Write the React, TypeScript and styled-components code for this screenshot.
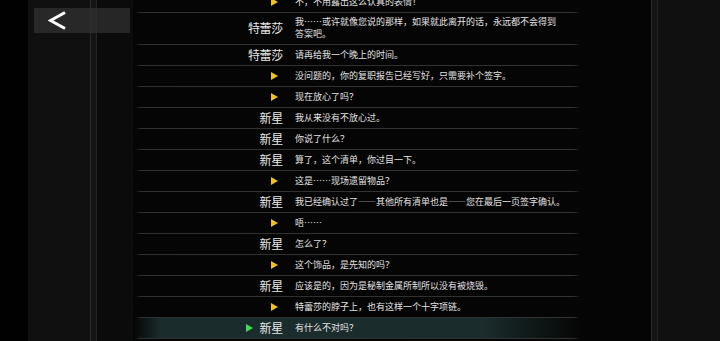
import styled, { createGlobalStyle } from "styled-components";

type Entry = {
  speaker?: string;
  lines: string[];
  current?: boolean;
};

const LOG: Entry[] = [
  { lines: ["不，不用露出这么认真的表情！"] },
  {
    speaker: "特蕾莎",
    lines: ["我……或许就像您说的那样，如果就此离开的话，永远都不会得到", "答案吧。"],
  },
  { speaker: "特蕾莎", lines: ["请再给我一个晚上的时间。"] },
  { lines: ["没问题的，你的复职报告已经写好，只需要补个签字。"] },
  { lines: ["现在放心了吗？"] },
  { speaker: "新星", lines: ["我从来没有不放心过。"] },
  { speaker: "新星", lines: ["你说了什么？"] },
  { speaker: "新星", lines: ["算了，这个清单，你过目一下。"] },
  { lines: ["这是……现场遗留物品？"] },
  { speaker: "新星", lines: ["我已经确认过了——其他所有清单也是——您在最后一页签字确认。"] },
  { lines: ["唔……"] },
  { speaker: "新星", lines: ["怎么了？"] },
  { lines: ["这个饰品，是先知的吗？"] },
  { speaker: "新星", lines: ["应该是的，因为是秘制金属所制所以没有被烧毁。"] },
  { lines: ["特蕾莎的脖子上，也有这样一个十字项链。"] },
  { speaker: "新星", lines: ["有什么不对吗？"], current: true },
];

const GlobalStyle = createGlobalStyle`
  html, body {
    margin: 0;
    padding: 0;
    background: #000;
    overflow: hidden;
  }
  body {
    font-family: "Noto Sans CJK SC", "Noto Sans", sans-serif;
  }
`;

export default function App() {
  return (
    <>
      <GlobalStyle />
      <Screen lang="zh-CN">
        <Edge />
        <SidePanel />
        <Rail />
        <Gutter $shade="#0b0b0b" $width={36} />
        <LogPanel>
          <LogList>
            {LOG.map((entry, i) => (
              <Row key={i} $current={entry.current}>
                <Lead>
                  {entry.current && <Marker $color="#3fdc55" />}
                  {entry.speaker ? (
                    <Speaker>{entry.speaker}</Speaker>
                  ) : (
                    <Marker $color="#f2c21c" $narration />
                  )}
                </Lead>
                <Lines>
                  {entry.lines.map((line, j) => (
                    <Line key={j}>{line}</Line>
                  ))}
                </Lines>
              </Row>
            ))}
          </LogList>
        </LogPanel>
        <Gutter $shade="#050505" $width={69} />
        <Rail />
        <SidePanel $grow />
        <BackButton aria-label="back">
          <svg width="19" height="19" viewBox="0 0 19 19">
            <polyline
              points="17,1.5 2.5,9.5 17,17.5"
              fill="none"
              stroke="#fff"
              strokeWidth="3"
              strokeLinejoin="miter"
            />
          </svg>
        </BackButton>
      </Screen>
    </>
  );
}

const Screen = styled.div`
  position: relative;
  display: flex;
  width: 720px;
  height: 341px;
  overflow: hidden;
  background: #050505;
`;

const Edge = styled.div`
  width: 28px;
  flex-shrink: 0;
  background: #010101;
`;

const SidePanel = styled.div<{ $grow?: boolean }>`
  width: 62px;
  flex: ${(p) => (p.$grow ? "1" : "0 0 62px")};
  background: #101010;
`;

const Rail = styled.div`
  width: 5px;
  flex-shrink: 0;
  background: #141414;
  border-left: 1px solid #2a2a2a;
  border-right: 1px solid #232323;
`;

const Gutter = styled.div<{ $shade: string; $width: number }>`
  width: ${(p) => p.$width}px;
  flex-shrink: 0;
  background: ${(p) => p.$shade};
`;

const LogPanel = styled.div`
  width: 449px;
  flex-shrink: 0;
  overflow: hidden;
  background: #050505;
`;

const LogList = styled.div`
  margin-top: -8.5px;
  display: flex;
  flex-direction: column;
`;

const Row = styled.div<{ $current?: boolean }>`
  position: relative;
  display: grid;
  grid-template-columns: 150px 1fr;
  column-gap: 12px;
  align-items: center;
  box-sizing: border-box;
  min-height: 21px;
  padding: 3.5px 0 4.5px;
  background: ${(p) =>
    p.$current
      ? "linear-gradient(90deg, rgba(27,44,44,0) 0, #1b2c2c 28px, #1b2c2c 78%, rgba(27,44,44,0) 100%)"
      : "transparent"};

  &::after {
    content: "";
    position: absolute;
    left: 2px;
    right: 2px;
    bottom: 0;
    height: 1px;
    background: linear-gradient(
      90deg,
      rgba(52, 52, 52, 0) 0,
      #303030 6px,
      #323232 calc(100% - 6px),
      rgba(52, 52, 52, 0) 100%
    );
  }
`;

const Lead = styled.div`
  display: flex;
  align-items: center;
  justify-content: flex-end;
  gap: 7px;
`;

const Speaker = styled.span`
  font-size: 12px;
  line-height: 12px;
  color: #e8e8e8;
  letter-spacing: -0.3px;
`;

const Marker = styled.span<{ $color: string; $narration?: boolean }>`
  width: 0;
  height: 0;
  border-top: 4.5px solid transparent;
  border-bottom: 4.5px solid transparent;
  border-left: 7px solid ${(p) => p.$color};
  margin-right: ${(p) => (p.$narration ? "5px" : "0")};
`;

const Lines = styled.div`
  display: flex;
  flex-direction: column;
`;

const Line = styled.span`
  font-size: 9px;
  line-height: 12px;
  color: #e2e2e2;
  white-space: nowrap;
  font-variant-east-asian: full-width;
`;

const BackButton = styled.button`
  position: absolute;
  left: 34px;
  top: 8px;
  width: 96px;
  height: 25px;
  display: flex;
  align-items: center;
  padding: 0 0 0 14px;
  border: none;
  background: rgba(48, 48, 48, 0.75);
  cursor: pointer;
`;
